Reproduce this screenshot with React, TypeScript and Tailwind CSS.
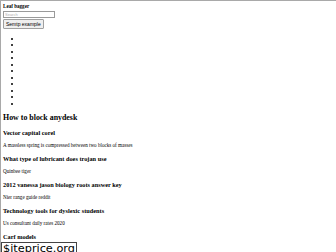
const items = [
  { title: 'Vector capital corel', text: 'A massless spring is compressed between two blocks of masses' },
  { title: 'What type of lubricant does trojan use', text: 'Quinbee tiger' },
  { title: '2012 vanessa jason biology roots answer key', text: 'Nier range guide reddit' },
  { title: 'Technology tools for dyslexic students', text: 'Us consultant daily rates 2020' },
]

export default function App() {
  return (
    <div className="relative h-[252px] overflow-hidden bg-white border-t border-l border-[#a9a9a9] pl-[2px] pt-[2px] text-black font-['Liberation_Serif',serif]">
      <div className="text-[5.1px] leading-[6px] font-bold">Leaf bagger</div>
      <input
        className="mt-[2px] block w-[52px] h-[7px] border border-[#9a9a9a] px-[1px] text-[4px] leading-[5px] placeholder-[#b0b0b0] font-['Liberation_Sans',sans-serif] outline-none"
        placeholder="Search"
      />
      <button className="mt-[1px] block h-[10px] px-[2px] border border-[#a0a0a0] rounded-[1px] bg-[#efefef] text-[5px] leading-[8px] font-['Liberation_Sans',sans-serif]">
        Semtp example
      </button>
      <ul className="mt-[5.5px] list-disc pl-[18px] text-[5.3px]">
        {Array.from({ length: 11 }).map((_, i) => (
          <li key={i} className="h-[6.54px] leading-[6.54px]"></li>
        ))}
      </ul>
      <h2 className="mt-[7px] text-[7.9px] leading-[9px] font-bold">How to block anydesk</h2>
      {items.map((it) => (
        <div key={it.title}>
          <h3 className="mt-[6.5px] text-[6.3px] leading-[7px] font-bold">{it.title}</h3>
          <p className="mt-[6.5px] text-[5.1px] leading-[6px]">{it.text}</p>
        </div>
      ))}
      <h3 className="mt-[6.5px] text-[6.3px] leading-[7px] font-bold">Carf models</h3>
      <div className="absolute left-0 top-[241px] border border-[#444] bg-white px-[1px] text-[11.3px] leading-[10px] pt-[1px] font-['DejaVu_Sans',sans-serif]">
        $iteprice.org
      </div>
    </div>
  )
}
